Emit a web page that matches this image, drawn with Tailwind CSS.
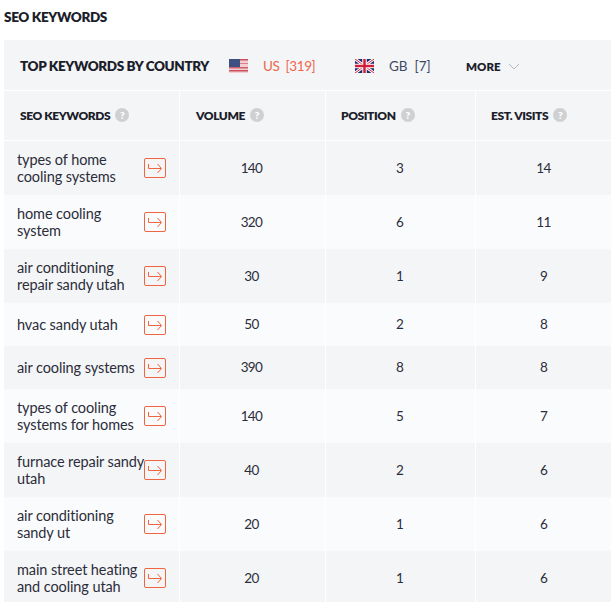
<!DOCTYPE html>
<html lang="en">
<head>
<meta charset="UTF-8">
<title>SEO Keywords</title>
<script src="https://cdn.jsdelivr.net/npm/@tailwindcss/browser@4"></script>
</head>
<body class="bg-white font-['Lato',sans-serif] text-[#2b2d3a] overflow-hidden">
<div class="w-[612px] h-[602px] pl-1 pr-px overflow-hidden">
  <h2 class="h-10 pt-[9px] text-[13.5px] leading-4 font-extrabold text-[#1c1e2b] tracking-[-0.35px]">SEO KEYWORDS</h2>
  <div class="bg-[#f4f5f7]">
    <div class="h-[51px] pt-[3px] flex items-center pl-4 border-b border-white text-[13.5px]">
      <span class="w-[209px] whitespace-nowrap font-extrabold text-[13.5px] tracking-[-0.38px] text-[#1c1e2b]">TOP KEYWORDS BY COUNTRY</span>
      <svg class="w-[19px] h-[14px] -mt-0.5" viewBox="0 0 19 14"><rect width="19" height="14" fill="#f3cfd2"/><rect y="0" width="19" height="1.5" fill="#c9505c"/><rect y="4" width="19" height="1" fill="#d9808a"/><rect y="8" width="19" height="1.5" fill="#d0606c"/><rect y="11" width="19" height="1.5" fill="#c9505c"/><rect width="11" height="8" fill="#3f4f82"/></svg>
      <span class="ml-[15px] text-[#f0654a] w-[92px] font-normal tracking-[-0.4px] whitespace-pre">US  [319]</span>
      <svg class="w-[19px] h-[14px] -mt-0.5" viewBox="0 0 19 14"><rect width="19" height="14" fill="#1d2a6d"/><path d="M0 0L19 14M19 0L0 14" stroke="#fff" stroke-width="3"/><path d="M0 0L19 14M19 0L0 14" stroke="#d11f3a" stroke-width="1"/><path d="M9.5 0V14M0 7H19" stroke="#fff" stroke-width="4.5"/><path d="M9.5 0V14M0 7H19" stroke="#d11f3a" stroke-width="2.5"/></svg>
      <span class="ml-[15px] text-[#3d4a63] w-[77px] font-normal whitespace-pre">GB  [7]</span>
      <span class="font-extrabold text-[11.5px] text-[#1c1e2b]">MORE</span>
      <svg class="w-[12px] h-[7px] ml-[7px]" viewBox="0 0 12 7" fill="none" stroke="#b4b7bd"><path d="M1 1l5 5 5-5"/></svg>
    </div>
    <div class="grid grid-cols-[176px_146px_150px_1fr] h-[50px] pt-px border-b border-white text-[12px] tracking-[-0.42px] font-extrabold text-[#1c1e2b]">
      <div class="flex items-center gap-[5px] pl-4 border-r border-white">SEO KEYWORDS <i class="w-[14px] h-[14px] -mt-0.5 rounded-full bg-[#cfd0d2] text-white not-italic text-[10px] flex items-center justify-center">?</i></div>
      <div class="flex items-center gap-[5px] pl-4 border-r border-white">VOLUME <i class="w-[14px] h-[14px] -mt-0.5 rounded-full bg-[#cfd0d2] text-white not-italic text-[10px] flex items-center justify-center">?</i></div>
      <div class="flex items-center gap-[5px] pl-[15px] border-r border-white">POSITION <i class="w-[14px] h-[14px] -mt-0.5 rounded-full bg-[#cfd0d2] text-white not-italic text-[10px] flex items-center justify-center">?</i></div>
      <div class="flex items-center gap-[5px] pl-[15px]">EST. VISITS <i class="w-[14px] h-[14px] -mt-0.5 rounded-full bg-[#cfd0d2] text-white not-italic text-[10px] flex items-center justify-center">?</i></div>
    </div>
  </div>
  <div id="rows" class="text-[14.5px] leading-[17px] font-normal"></div>
</div>
<script>
const data = [
  ['types of home cooling systems', 140, 3, 14, 54],
  ['home cooling system', 320, 6, 11, 54],
  ['air conditioning repair sandy utah', 30, 1, 9, 54],
  ['hvac sandy utah', 50, 2, 8, 43],
  ['air cooling systems', 390, 8, 8, 43],
  ['types of cooling systems for homes', 140, 5, 7, 54],
  ['furnace repair sandy utah', 40, 2, 6, 54],
  ['air conditioning sandy ut', 20, 1, 6, 54],
  ['main street heating and cooling utah', 20, 1, 6, 54]
];
const arrow = '<span class="w-[22px] h-5 shrink-0 border border-[#f0653f] rounded-[2px] flex items-center justify-center"><svg width="16" height="12" viewBox="0 0 16 12" fill="none" stroke="#f0653f"><path d="M1.5 2v4.5h12.5M10.5 2l4 4.5-4 4.5"/></svg></span>';
document.getElementById('rows').innerHTML = data.map((r, i) => `
  <div class="grid grid-cols-[176px_146px_150px_1fr] text-[#2b2d3a] ${i % 2 ? 'bg-[#fafbfd]' : 'bg-[#f4f5f7]'}" style="height:${r[4]}px">
    <div class="flex items-center pl-[13px] pr-[13px] border-r border-white tracking-[-0.1px]"><span class="flex-1 -mr-1">${r[0]}</span>${arrow}</div>
    <div class="flex items-center justify-center border-r border-white pr-0.5 text-[13.5px] tracking-[-0.6px]">${r[1]}</div>
    <div class="flex items-center justify-center border-r border-white pr-0.5 text-[13.5px] tracking-[-0.6px]">${r[2]}</div>
    <div class="flex items-center justify-center text-[13.5px] tracking-[-0.6px]">${r[3]}</div>
  </div>`).join('');
</script>
</body>
</html>
